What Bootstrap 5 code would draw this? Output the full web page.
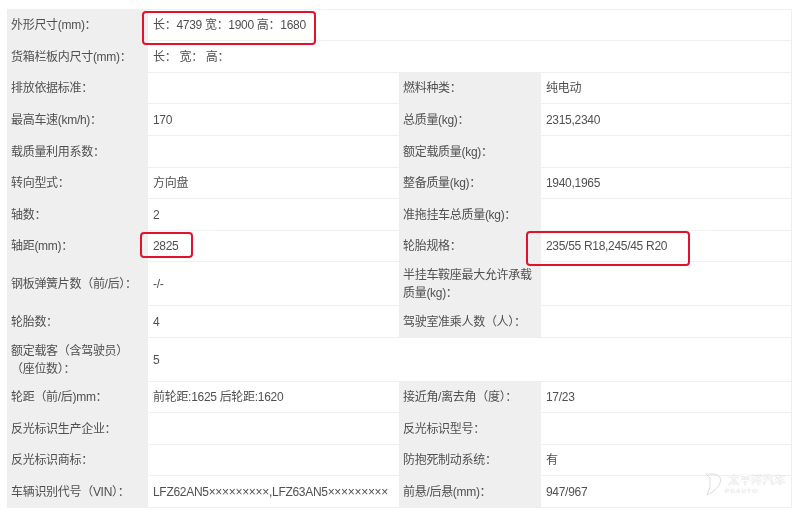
<!DOCTYPE html>
<html lang="zh-CN">
<head>
<meta charset="utf-8">
<title>车辆参数</title>
<link href="https://cdn.jsdelivr.net/npm/bootstrap@5.3.0/dist/css/bootstrap.min.css" rel="stylesheet">
<style>
html, body { background: #fff; height: 511px; overflow: hidden; }
.sheet { padding: 9px 8px 0 7px; font-family: "Liberation Sans", "Noto Sans CJK SC", sans-serif; font-size: 12px; letter-spacing: -.3px; color: #505050; position: relative; height: 511px; overflow: hidden; filter: blur(.3px); }
.spec { table-layout: fixed; width: 785px; margin: 0; border-collapse: collapse; border-top: 1px solid #efefef; border-right: 1px solid #efefef; }
.spec td { padding: 0 5px; vertical-align: middle; line-height: 18px; border: 0; border-bottom: 1px solid #efefef; color: #505050; font-size: 12px; background: #fff; box-shadow: none; }
.spec td.lab { background: #efefef; padding-left: 4px; padding-right: 6px; border-bottom-color: #efefef; }
.spec .w1 { width: 141px; }
.spec .w2 { width: 251px; }
.spec .w3 { width: 142px; }
.h31 { height: 31px; }
.h32 { height: 32px; }
.h44 { height: 44px; }
.callout { position: absolute; border: 2px solid #e2122f; border-radius: 4px; }
.c1 { left: 142px; top: 11px; width: 174px; height: 34px; }
.c2 { left: 140px; top: 232px; width: 53px; height: 26px; }
.c3 { left: 526px; top: 231px; width: 164px; height: 35px; }
.mark-wm { position: absolute; left: 705px; top: 473px; display: flex; gap: 5px; letter-spacing: 0; }
.mark-wm .cn { font-size: 11.5px; line-height: 14px; color: #fff; text-shadow: 0 0 1px #aaa; }
.mark-wm .en { font-size: 6px; line-height: 8px; letter-spacing: 1.4px; margin-left: -3px; color: #fff; text-shadow: 0 0 1px #aaa; }
</style>
</head>
<body>
<div class="sheet">
<table class="table spec">
<colgroup><col class="w1"><col class="w2"><col class="w3"><col></colgroup>
<tbody>
<tr class="h31"><td class="lab">外形尺寸(mm)：</td><td colspan="3">长：4739 宽：1900 高：1680</td></tr>
<tr class="h32"><td class="lab">货箱栏板内尺寸(mm)：</td><td colspan="3">长：&nbsp;宽：&nbsp;高：</td></tr>
<tr class="h31"><td class="lab">排放依据标准：</td><td></td><td class="lab">燃料种类：</td><td>纯电动</td></tr>
<tr class="h32"><td class="lab">最高车速(km/h)：</td><td>170</td><td class="lab">总质量(kg)：</td><td>2315,2340</td></tr>
<tr class="h32"><td class="lab">载质量利用系数：</td><td></td><td class="lab">额定载质量(kg)：</td><td></td></tr>
<tr class="h31"><td class="lab">转向型式：</td><td>方向盘</td><td class="lab">整备质量(kg)：</td><td>1940,1965</td></tr>
<tr class="h32"><td class="lab">轴数：</td><td>2</td><td class="lab">准拖挂车总质量(kg)：</td><td></td></tr>
<tr class="h31"><td class="lab">轴距(mm)：</td><td>2825</td><td class="lab">轮胎规格：</td><td>235/55 R18,245/45 R20</td></tr>
<tr class="h44"><td class="lab">钢板弹簧片数（前/后）：</td><td>-/-</td><td class="lab">半挂车鞍座最大允许承载质量(kg)：</td><td></td></tr>
<tr class="h32"><td class="lab">轮胎数：</td><td>4</td><td class="lab">驾驶室准乘人数（人）：</td><td></td></tr>
<tr class="h44"><td class="lab">额定载客（含驾驶员）（座位数）：</td><td>5</td><td colspan="2" class="blank"></td></tr>
<tr class="h31"><td class="lab">轮距（前/后)mm：</td><td>前轮距:1625 后轮距:1620</td><td class="lab">接近角/离去角（度）：</td><td>17/23</td></tr>
<tr class="h32"><td class="lab">反光标识生产企业：</td><td></td><td class="lab">反光标识型号：</td><td></td></tr>
<tr class="h31"><td class="lab">反光标识商标：</td><td></td><td class="lab">防抱死制动系统：</td><td>有</td></tr>
<tr class="h32"><td class="lab">车辆识别代号（VIN）：</td><td>LFZ62AN5×××××××××,LFZ63AN5×××××××××</td><td class="lab">前悬/后悬(mm)：</td><td>947/967</td></tr>
</tbody>
</table>
<div class="callout c1"></div>
<div class="callout c2"></div>
<div class="callout c3"></div>
<div class="mark-wm">
<svg width="18" height="23" viewBox="0 0 18 23" fill="none" stroke="#dcdcdc" stroke-width="1"><path d="M1 1h6c7 0 10 4 8 9-2 5-7 9-13 12l3-8V5"/><path d="M1 1l4 4"/></svg>
<div><div class="cn">太平洋汽车</div><div class="en">PCAUTO</div></div>
</div>
</div>
</body>
</html>
